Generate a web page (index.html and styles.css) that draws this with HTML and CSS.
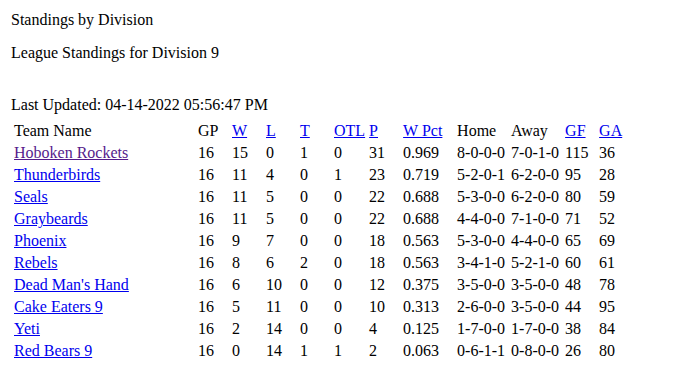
FILE: index.html
```html
<!DOCTYPE html>
<html>
<head>
<meta charset="utf-8">
<link rel="stylesheet" href="styles.css">
</head>
<body>
<div class="page">
  <div class="title">Standings by Division</div>
  <div class="subtitle">League Standings for Division 9</div>
  <div class="updated">Last Updated: 04-14-2022 05:56:47 PM</div>
  <table class="standings">
    <colgroup>
      <col class="c-team"><col class="c-sm"><col class="c-sm"><col class="c-sm"><col class="c-sm"><col class="c-sm"><col class="c-sm"><col class="c-md"><col class="c-md"><col class="c-md"><col class="c-sm"><col class="c-sm">
    </colgroup>
    <tr><td>Team Name</td><td>GP</td><td><a href="#">W</a></td><td><a href="#">L</a></td><td><a href="#">T</a></td><td><a href="#">OTL</a></td><td><a href="#">P</a></td><td><a href="#">W Pct</a></td><td>Home</td><td>Away</td><td><a href="#">GF</a></td><td><a href="#">GA</a></td></tr>
    <tr><td><a class="visited" href="#">Hoboken Rockets</a></td><td>16</td><td>15</td><td>0</td><td>1</td><td>0</td><td>31</td><td>0.969</td><td>8-0-0-0</td><td>7-0-1-0</td><td>115</td><td>36</td></tr>
    <tr><td><a href="#">Thunderbirds</a></td><td>16</td><td>11</td><td>4</td><td>0</td><td>1</td><td>23</td><td>0.719</td><td>5-2-0-1</td><td>6-2-0-0</td><td>95</td><td>28</td></tr>
    <tr><td><a href="#">Seals</a></td><td>16</td><td>11</td><td>5</td><td>0</td><td>0</td><td>22</td><td>0.688</td><td>5-3-0-0</td><td>6-2-0-0</td><td>80</td><td>59</td></tr>
    <tr><td><a href="#">Graybeards</a></td><td>16</td><td>11</td><td>5</td><td>0</td><td>0</td><td>22</td><td>0.688</td><td>4-4-0-0</td><td>7-1-0-0</td><td>71</td><td>52</td></tr>
    <tr><td><a href="#">Phoenix</a></td><td>16</td><td>9</td><td>7</td><td>0</td><td>0</td><td>18</td><td>0.563</td><td>5-3-0-0</td><td>4-4-0-0</td><td>65</td><td>69</td></tr>
    <tr><td><a href="#">Rebels</a></td><td>16</td><td>8</td><td>6</td><td>2</td><td>0</td><td>18</td><td>0.563</td><td>3-4-1-0</td><td>5-2-1-0</td><td>60</td><td>61</td></tr>
    <tr><td><a href="#">Dead Man's Hand</a></td><td>16</td><td>6</td><td>10</td><td>0</td><td>0</td><td>12</td><td>0.375</td><td>3-5-0-0</td><td>3-5-0-0</td><td>48</td><td>78</td></tr>
    <tr><td><a href="#">Cake Eaters 9</a></td><td>16</td><td>5</td><td>11</td><td>0</td><td>0</td><td>10</td><td>0.313</td><td>2-6-0-0</td><td>3-5-0-0</td><td>44</td><td>95</td></tr>
    <tr><td><a href="#">Yeti</a></td><td>16</td><td>2</td><td>14</td><td>0</td><td>0</td><td>4</td><td>0.125</td><td>1-7-0-0</td><td>1-7-0-0</td><td>38</td><td>84</td></tr>
    <tr><td><a href="#">Red Bears 9</a></td><td>16</td><td>0</td><td>14</td><td>1</td><td>1</td><td>2</td><td>0.063</td><td>0-6-1-1</td><td>0-8-0-0</td><td>26</td><td>80</td></tr>
  </table>
</div>
</body>
</html>
```
FILE: styles.css
```css
body {
  margin: 8px;
  font-family: "Liberation Serif", "Times New Roman", serif;
  font-size: 16px;
  color: #000;
  background: #fff;
}
.page {
  padding: 3px;
}
.title {
  line-height: 18px;
}
.subtitle {
  line-height: 18px;
  margin-top: 15px;
}
.updated {
  line-height: 18px;
  margin-top: 34px;
}
.standings {
  margin-top: 5px;
  border-spacing: 2px;
  table-layout: fixed;
  border-collapse: separate;
}
.standings td {
  padding: 1px;
  line-height: 18px;
  white-space: nowrap;
  text-align: left;
  vertical-align: top;
}
.c-team { width: 182px; }
.c-sm { width: 32px; }
.c-md { width: 52px; }
a {
  color: #0000ee;
  text-decoration: underline;
}
a.visited {
  color: #551a8b;
}
```
